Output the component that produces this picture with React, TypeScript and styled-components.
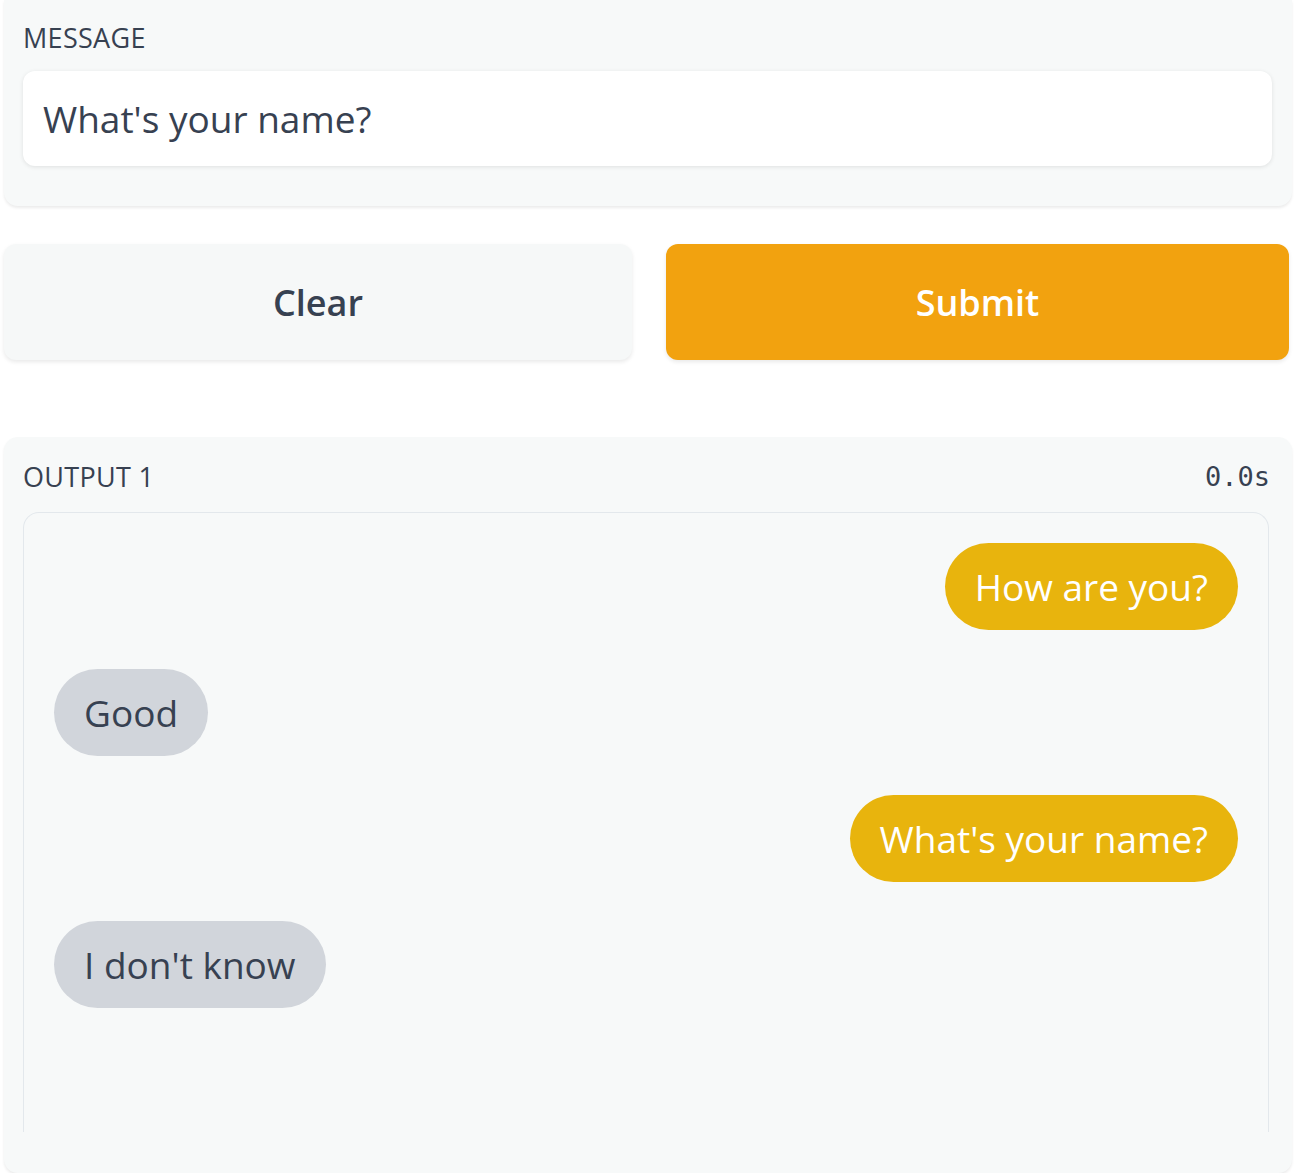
import React from "react";
import styled, { createGlobalStyle } from "styled-components";

const Global = createGlobalStyle`
  html, body { margin: 0; padding: 0; background: #ffffff; }
  body { font-family: "Open Sans", "Noto Sans", sans-serif; color: #374151; }
  * { box-sizing: border-box; }
`;

const Page = styled.div`
  width: 1294px;
  padding: 0 2px 0 4px;
  display: flex;
  flex-direction: column;
`;

const Panel = styled.section<{ $top?: boolean }>`
  background: #f7f9f9;
  border-radius: ${(p) => (p.$top ? "0 0 14px 14px" : "14px")};
  box-shadow: 0 2px 3px rgba(0, 0, 0, 0.08);
  padding: ${(p) => (p.$top ? "20px 20px 40px 19px" : "22px 22px 41px 19px")};
  display: flex;
  flex-direction: column;
`;

const LabelRow = styled.div<{ $gap: number }>`
  display: flex;
  justify-content: space-between;
  align-items: center;
  height: 34px;
  margin-bottom: ${(p) => p.$gap}px;
`;

const Label = styled.span`
  font-size: 27px;
  letter-spacing: 0.3px;
  color: #374151;
  text-transform: uppercase;
`;

const Timer = styled.span`
  font-family: "DejaVu Sans Mono", "Liberation Mono", monospace;
  font-size: 27px;
  color: #374151;
`;

const Input = styled.div`
  background: #ffffff;
  border-radius: 12px;
  height: 95px;
  padding: 0 20px;
  display: flex;
  align-items: center;
  font-size: 37px;
  color: #374151;
  box-shadow: 0 1px 4px rgba(0, 0, 0, 0.1);
`;

const ButtonRow = styled.div`
  display: grid;
  grid-template-columns: 628px 623px;
  column-gap: 34px;
  margin: 38px 0 77px;
`;

const Button = styled.button<{ $primary?: boolean }>`
  height: 116px;
  border: none;
  border-radius: 12px;
  font-family: "Open Sans", "Noto Sans", sans-serif;
  font-weight: 600;
  font-size: 36px;
  background: ${(p) => (p.$primary ? "#f2a20f" : "#f6f8f8")};
  color: ${(p) => (p.$primary ? "#ffffff" : "#374151")};
  box-shadow: 0 2px 4px rgba(0, 0, 0, 0.09);
  cursor: pointer;
`;

const ChatBox = styled.div`
  height: 620px;
  margin-right: 1px;
  border: 1px solid #e3e8ec;
  border-bottom: none;
  border-radius: 16px 16px 0 0;
  padding: 30px 30px 0 30px;
  display: flex;
  flex-direction: column;
  gap: 39px;
`;

const Bubble = styled.div<{ $user?: boolean }>`
  align-self: ${(p) => (p.$user ? "flex-end" : "flex-start")};
  height: 87px;
  padding: 0 30px;
  border-radius: 44px;
  display: flex;
  align-items: center;
  font-size: 37px;
  background: ${(p) => (p.$user ? "#e8b40d" : "#d1d5db")};
  color: ${(p) => (p.$user ? "#ffffff" : "#374151")};
`;

const messages: { text: string; user: boolean }[] = [
  { text: "How are you?", user: true },
  { text: "Good", user: false },
  { text: "What's your name?", user: true },
  { text: "I don't know", user: false },
];

export default function App() {
  return (
    <Page>
      <Global />
      <Panel $top>
        <LabelRow $gap={17}>
          <Label>Message</Label>
        </LabelRow>
        <Input>What's your name?</Input>
      </Panel>
      <ButtonRow>
        <Button>Clear</Button>
        <Button $primary>Submit</Button>
      </ButtonRow>
      <Panel>
        <LabelRow $gap={19}>
          <Label>Output 1</Label>
          <Timer>0.0s</Timer>
        </LabelRow>
        <ChatBox>
          {messages.map((m, i) => (
            <Bubble key={i} $user={m.user}>
              {m.text}
            </Bubble>
          ))}
        </ChatBox>
      </Panel>
    </Page>
  );
}
